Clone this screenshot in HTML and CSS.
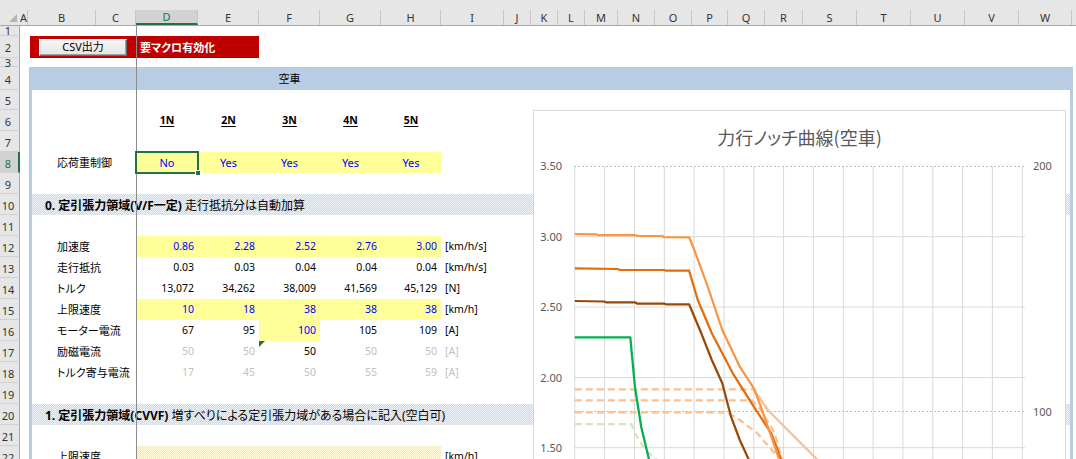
FILE: index.html
```html
<!DOCTYPE html>
<html lang="ja">
<head>
<meta charset="utf-8">
<title>力行ノッチ曲線</title>
<link rel="stylesheet" href="styles.css">
</head>
<body>
<div class="app">
  <div class="colheads">
    <div class="corner"><span class="corner-tri"></span></div>
    <div class="ch w-a">A</div>
    <div class="ch w-b">B</div>
    <div class="ch w-c">C</div>
    <div class="ch w-d sel">D</div>
    <div class="ch w-e">E</div>
    <div class="ch w-f">F</div>
    <div class="ch w-g">G</div>
    <div class="ch w-h">H</div>
    <div class="ch w-i">I</div>
    <div class="ch w-j">J</div>
    <div class="ch w-k">K</div>
    <div class="ch w-l">L</div>
    <div class="ch w-m">M</div>
    <div class="ch w-n">N</div>
    <div class="ch w-o">O</div>
    <div class="ch w-p">P</div>
    <div class="ch w-q">Q</div>
    <div class="ch w-r">R</div>
    <div class="ch w-s">S</div>
    <div class="ch w-t">T</div>
    <div class="ch w-u">U</div>
    <div class="ch w-v">V</div>
    <div class="ch w-w">W</div>
    <div class="ch w-x"></div>
  </div>

  <div class="main">
    <div class="rowheads">
      <div class="rh h1 tiny">1</div>
      <div class="rh h2">2</div>
      <div class="rh h3 tiny">3</div>
      <div class="rh h4">4</div>
      <div class="rh h5">5</div>
      <div class="rh">6</div>
      <div class="rh">7</div>
      <div class="rh sel">8</div>
      <div class="rh">9</div>
      <div class="rh">10</div>
      <div class="rh">11</div>
      <div class="rh">12</div>
      <div class="rh">13</div>
      <div class="rh">14</div>
      <div class="rh">15</div>
      <div class="rh">16</div>
      <div class="rh">17</div>
      <div class="rh">18</div>
      <div class="rh">19</div>
      <div class="rh">20</div>
      <div class="rh">21</div>
      <div class="rh">22</div>
    </div>

    <div class="sheet">
      <div class="srow h1"></div>
      <div class="srow h2">
        <div class="macro">
          <button class="csv" type="button">CSV出力</button>
          <span class="warn">要マクロ有効化</span>
        </div>
      </div>
      <div class="srow h3"></div>

      <div class="frame">
        <div class="grow band"><div></div><div></div><div></div><div class="c">空車</div><div></div><div></div><div></div></div>
        <div class="grow h5"></div>
        <div class="grow"><div></div><div class="c hd">1N</div><div class="c hd">2N</div><div class="c hd">3N</div><div class="c hd">4N</div><div class="c hd">5N</div><div></div></div>
        <div class="grow"></div>
        <div class="grow"><div class="lbl">応荷重制御</div><div class="c y b">No</div><div class="c y b">Yes</div><div class="c y b">Yes</div><div class="c y b">Yes</div><div class="c y b">Yes</div><div></div></div>
        <div class="grow"></div>
        <div class="sec"><b>0. 定引張力領域(V/F一定)</b>&nbsp;走行抵抗分は自動加算</div>
        <div class="grow"></div>
        <div class="grow"><div class="lbl">加速度</div><div class="n y b">0.86</div><div class="n y b">2.28</div><div class="n y b">2.52</div><div class="n y b">2.76</div><div class="n y b">3.00</div><div class="u">[km/h/s]</div></div>
        <div class="grow"><div class="lbl">走行抵抗</div><div class="n">0.03</div><div class="n">0.03</div><div class="n">0.04</div><div class="n">0.04</div><div class="n">0.04</div><div class="u">[km/h/s]</div></div>
        <div class="grow"><div class="lbl">トルク</div><div class="n">13,072</div><div class="n">34,262</div><div class="n">38,009</div><div class="n">41,569</div><div class="n">45,129</div><div class="u">[N]</div></div>
        <div class="grow"><div class="lbl">上限速度</div><div class="n y b">10</div><div class="n y b">18</div><div class="n y b">38</div><div class="n y b">38</div><div class="n y b">38</div><div class="u">[km/h]</div></div>
        <div class="grow"><div class="lbl">モーター電流</div><div class="n">67</div><div class="n">95</div><div class="n y b">100</div><div class="n">105</div><div class="n">109</div><div class="u">[A]</div></div>
        <div class="grow"><div class="lbl">励磁電流</div><div class="n g">50</div><div class="n g">50</div><div class="n err">50</div><div class="n g">50</div><div class="n g">50</div><div class="u g">[A]</div></div>
        <div class="grow"><div class="lbl">トルク寄与電流</div><div class="n g">17</div><div class="n g">45</div><div class="n g">50</div><div class="n g">55</div><div class="n g">59</div><div class="u g">[A]</div></div>
        <div class="grow"></div>
        <div class="sec"><b>1. 定引張力領域(CVVF)</b>&nbsp;増すべりによる定引張力域がある場合に記入(空白可)</div>
        <div class="grow"></div>
        <div class="grow"><div class="lbl">上限速度</div><div class="yh"></div><div class="u">[km/h]</div></div>
      </div>
    </div>
  </div>

  <div class="freeze"></div>
  <div class="selbox"><span class="handle"></span></div>

  <div class="chart">
    <div class="chart-title">力行ノッチ曲線(空車)</div>
    <svg class="plot" width="533" height="360" viewBox="0 0 533 360">
      <g stroke="#d9d9d9" stroke-width="1">
        <line x1="40.8" y1="55" x2="40.8" y2="360"/>
        <line x1="70.6" y1="55" x2="70.6" y2="360"/>
        <line x1="100.5" y1="55" x2="100.5" y2="360"/>
        <line x1="130.3" y1="55" x2="130.3" y2="360"/>
        <line x1="160.1" y1="55" x2="160.1" y2="360"/>
        <line x1="190" y1="55" x2="190" y2="360"/>
        <line x1="219.8" y1="55" x2="219.8" y2="360"/>
        <line x1="249.6" y1="55" x2="249.6" y2="360"/>
        <line x1="279.4" y1="55" x2="279.4" y2="360"/>
        <line x1="309.3" y1="55" x2="309.3" y2="360"/>
        <line x1="339.1" y1="55" x2="339.1" y2="360"/>
        <line x1="368.9" y1="55" x2="368.9" y2="360"/>
        <line x1="398.8" y1="55" x2="398.8" y2="360"/>
        <line x1="428.6" y1="55" x2="428.6" y2="360"/>
        <line x1="458.4" y1="55" x2="458.4" y2="360"/>
        <line x1="488.3" y1="55" x2="488.3" y2="360"/>
      </g>
      <g stroke="#d9d9d9" stroke-width="1">
        <line x1="40" y1="125.7" x2="491" y2="125.7"/>
        <line x1="40" y1="196" x2="491" y2="196"/>
        <line x1="40" y1="266.5" x2="491" y2="266.5"/>
        <line x1="40" y1="336.7" x2="491" y2="336.7"/>
      </g>
      <g stroke="#bfbfbf" stroke-width="1" stroke-dasharray="2 2">
        <line x1="40" y1="55.5" x2="491" y2="55.5"/>
        <line x1="40" y1="300.5" x2="491" y2="300.5"/>
      </g>
      <g class="axis" fill="#595959">
        <text x="28" y="59" text-anchor="end">3.50</text>
        <text x="28" y="129.7" text-anchor="end">3.00</text>
        <text x="28" y="200" text-anchor="end">2.50</text>
        <text x="28" y="270.5" text-anchor="end">2.00</text>
        <text x="28" y="340.7" text-anchor="end">1.50</text>
        <text x="499" y="59">200</text>
        <text x="499" y="305">100</text>
      </g>
      <g fill="none" stroke-width="2.25" stroke-linejoin="round">
        <polyline stroke="#d7e4bd" stroke-dasharray="7 4" points="40.8,313 97.4,313 100.9,322.3 111.4,339 121.9,348 130,355"/>
        <polyline stroke="#fac090" stroke-dasharray="7 4" points="40.8,278.3 219.8,278.3 233.8,299"/>
        <polyline stroke="#fac090" stroke-dasharray="7 4" points="40.8,289.3 218,289.3 226.8,299 240.8,322.3 247.7,348 252,362"/>
        <polyline stroke="#fac090" stroke-dasharray="7 4" points="40.8,301.3 193.6,301.3 205.8,309 223.3,322.3 240.8,342.3 246,348 255,358"/>
        <polyline stroke="#fac090" points="219.8,279 233.8,299 282.7,348 300,366"/>
        <polyline stroke="#00b050" points="40.8,226.3 96.3,226.3 100.9,275.7 107.2,315.7 114.9,348 118,365"/>
        <polyline stroke="#984807" points="40.8,190 70,190.5 72,191.3 100.9,191.3 103,192.5 130,192.6 132,193.3 155.1,193.3 167.3,222.3 177.8,249 188.3,272.3 197,305.7 205.8,329 214.5,348 222,365"/>
        <polyline stroke="#e46c0a" points="40.8,157.3 83.4,158 86,158.8 130,159 132,159.7 155.1,159.7 163.8,189 177.8,222.3 198.8,262.3 219.8,295.7 237.3,322.3 247,348 255,369"/>
        <polyline stroke="#f79646" points="40.8,123 62,123.3 64,124 100.9,124 103,124.8 128,125 130,126.2 155.1,126.3 160.3,139 172.6,172.3 188.3,219 205.8,255.7 219.8,277.3 226.8,295.7 237.3,325.7 245,348 252,369"/>
      </g>
    </svg>
  </div>
</div>
</body>
</html>
```

FILE: styles.css
```css
* { box-sizing: border-box; margin: 0; padding: 0; }

html, body {
  width: 1076px;
  height: 459px;
  overflow: hidden;
  background: #fff;
}

body {
  font-family: "Noto Sans", "Noto Sans CJK JP", sans-serif;
  font-size: 11px;
  color: #000;
  font-feature-settings: "palt";
}

.app {
  position: relative;
  width: 1076px;
  height: 459px;
  overflow: hidden;
}

/* ---------- column headers ---------- */
.colheads {
  display: flex;
  height: 26px;
  background: #e6e6e6;
  border-bottom: 1px solid #a8a8a8;
}

.corner {
  width: 20px;
  flex: none;
  display: flex;
  align-items: flex-end;
  justify-content: flex-end;
  padding: 0 3px 3px 0;
}

.corner-tri {
  width: 0;
  height: 0;
  border-left: 8px solid transparent;
  border-bottom: 8px solid #b4b4b4;
}

.ch {
  flex: none;
  align-self: flex-end;
  height: 15px;
  line-height: 15px;
  text-align: center;
  border-right: 1px solid #c6c6c6;
  color: #333;
  font-size: 11px;
}

.ch.sel {
  background: #d2d2d2;
  color: #217346;
  border-bottom: 2px solid #217346;
  line-height: 13px;
}

.w-a { width: 8px; }
.w-b { width: 68px; }
.w-c { width: 40px; }
.w-d { width: 62px; }
.w-e { width: 61px; }
.w-f { width: 61px; }
.w-g { width: 61px; }
.w-h { width: 60px; }
.w-i { width: 63px; }
.w-j { width: 27px; }
.w-k { width: 27px; }
.w-l { width: 27px; }
.w-m { width: 33px; }
.w-n { width: 37px; }
.w-o { width: 37px; }
.w-p { width: 36px; }
.w-q { width: 37px; }
.w-r { width: 38px; }
.w-s { width: 54px; }
.w-t { width: 54px; }
.w-u { width: 54px; }
.w-v { width: 54px; }
.w-w { width: 53px; }
.w-x { width: 10px; border-right: none; }

/* ---------- body ---------- */
.main {
  display: flex;
}

.rowheads {
  width: 20px;
  flex: none;
  background: #e6e6e6;
}

.rh {
  height: 21px;
  display: flex;
  align-items: center;
  justify-content: center;
  padding: 3px 3px 0 0;
  border-bottom: 1px solid #d0d0d0;
  border-right: 1px solid #a8a8a8;
  color: #333;
  font-size: 11px;
  line-height: 12px;
  overflow: hidden;
}

.rh.tiny {
  padding-top: 0;
  line-height: 9px;
  overflow: visible;
  position: relative;
  z-index: 1;
}

.rh.sel {
  background: #d2d2d2;
  color: #217346;
  border-right: 2px solid #217346;
  padding-right: 2px;
}

.h1 { height: 10px; }
.h2 { height: 22px; }
.h3 { height: 9px; }
.h4 { height: 23px; }
.h5 { height: 20px; }

.sheet {
  flex: 1;
  min-width: 0;
}

.macro {
  margin-left: 10px;
  width: 229px;
  height: 22px;
  background: #c00000;
  display: flex;
  align-items: center;
}

.csv {
  margin-left: 9px;
  width: 88px;
  height: 17px;
  font-family: "Noto Sans", "Noto Sans CJK JP", sans-serif;
  font-size: 11px;
  line-height: 14px;
  color: #000;
  background: linear-gradient(#f6f6f6, #e4e4e4);
  border: 1px solid;
  border-color: #fdfdfd #6a6a6a #6a6a6a #fdfdfd;
  box-shadow: inset -1px -1px 0 #a0a0a0;
}

.warn {
  margin-left: 13px;
  color: #fff;
  font-weight: bold;
  font-size: 11px;
}

/* ---------- framed sheet area ---------- */
.frame {
  margin-left: 9px;
  width: 1044px;
  border-left: 3px solid #b8cce4;
  border-right: 3px solid #b8cce4;
}

.grow {
  display: grid;
  grid-template-columns: 104px 62px 61px 61px 61px 60px 1fr;
  height: 21px;
}

.grow > * {
  line-height: 21px;
  white-space: nowrap;
}

.grow.band {
  height: 23px;
  background: #b8cce4;
}
.grow.band > * { line-height: 23px; }

.grow.h5 { height: 20px; }

.lbl {
  padding-left: 25px;
  font-size: 11px;
}

.n {
  text-align: right;
  padding-right: 4px;
  font-size: 10.5px;
}

.c {
  text-align: center;
  font-size: 11px;
}

.hd {
  font-weight: bold;
  font-size: 10.5px;
  text-decoration: underline;
  text-underline-offset: 2px;
}

.u {
  padding-left: 4px;
  font-size: 10.5px;
}

.y { background: #ffff99; }
.b { color: #0000ff; }
.g { color: #bfbfbf; }

.err { position: relative; }
.err::before {
  content: "";
  position: absolute;
  left: 0;
  top: 0;
  border-top: 6px solid #217346;
  border-right: 6px solid transparent;
}

.yh {
  grid-column: 2 / 7;
  background: repeating-conic-gradient(#ffeaa0 0 25%, #fff7d6 0 50%) 0 0 / 2px 2px;
}

.sec {
  height: 21px;
  display: flex;
  align-items: center;
  padding-left: 13px;
  font-size: 12px;
  white-space: nowrap;
  background: repeating-conic-gradient(#c9daef 0 25%, #eef3fa 0 50%) 0 0 / 2px 2px;
}

/* ---------- overlays ---------- */
.freeze {
  position: absolute;
  left: 136px;
  top: 26px;
  width: 1px;
  height: 433px;
  background: #8c8c8c;
}

.selbox {
  position: absolute;
  left: 135px;
  top: 151px;
  width: 64px;
  height: 23px;
  border: 2px solid #217346;
}

.handle {
  position: absolute;
  right: -4px;
  bottom: -4px;
  width: 6px;
  height: 6px;
  background: #217346;
  border: 1px solid #fff;
}

/* ---------- chart ---------- */
.chart {
  position: absolute;
  left: 533px;
  top: 110px;
  width: 533px;
  height: 380px;
  background: #fff;
  border: 1px solid #d9d9d9;
}

.chart-title {
  position: relative;
  z-index: 1;
  text-align: center;
  padding-top: 14px;
  font-family: "Noto Sans CJK JP", sans-serif;
  font-size: 18px;
  line-height: 24px;
  color: #595959;
}

.plot {
  position: absolute;
  left: 0;
  top: 0;
}

.axis text {
  font-family: "Noto Sans", sans-serif;
  font-size: 11px;
}
```
